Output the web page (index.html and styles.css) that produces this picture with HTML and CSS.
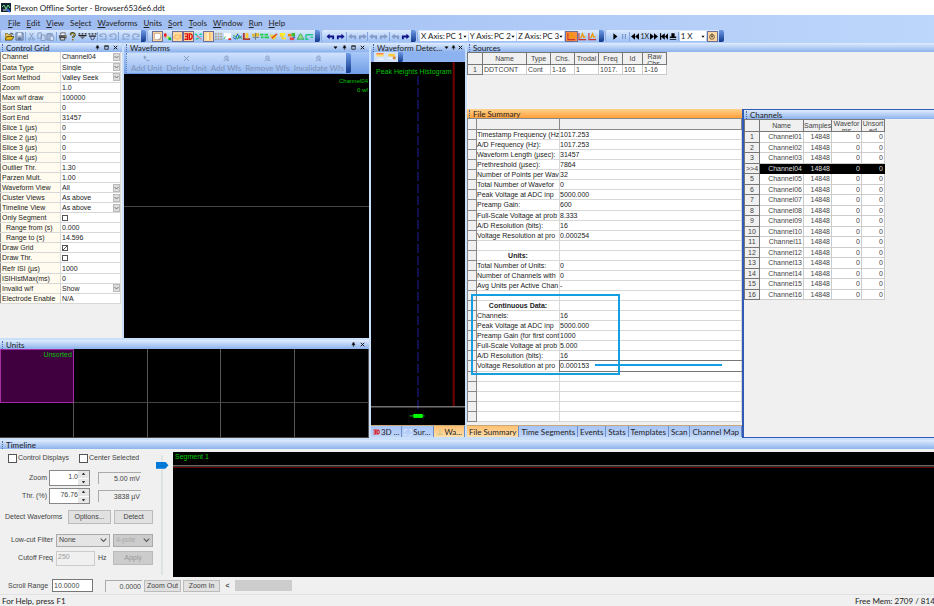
FILE: index.html
```html
<!DOCTYPE html>
<html lang="en">
<head>
    <meta charset="UTF-8">
    <meta name="viewport" content="width=device-width, initial-scale=1.0">
    <title>Plexon Offline Sorter - Browser6536e6.ddt</title>
    <link rel="stylesheet" href="styles.css">
</head>
<body>

    <!-- Icon set, 10x10 grid -->
    <svg class="icon-defs" aria-hidden="true">
        <symbol id="i-open" viewBox="0 0 10 10"><path d="M0 9V2h3l1 1h3v2" fill="#f0d060" stroke="#554400" stroke-width=".8"/><path d="M0 9l2-4h8L7.500 9z" fill="#e8b820" stroke="#443300" stroke-width=".8"/><path d="M6 1.500h2l1 1.500" fill="none" stroke="#222"/></symbol>
        <symbol id="i-save" viewBox="0 0 10 10"><path d="M1 1h8v8H1z" fill="#9fb2d2" stroke="#5b7299"/><path d="M3 1h4v3H3z" fill="#e8effa"/><path d="M3 6h4v3H3z" fill="#5b7299"/></symbol>
        <symbol id="i-cut" viewBox="0 0 10 10"><path d="M3 1l3.500 6M7 1L3.500 7" stroke="#8398bd"/><circle cx="3" cy="8" r="1.200" fill="none" stroke="#8398bd"/><circle cx="7" cy="8" r="1.200" fill="none" stroke="#8398bd"/></symbol>
        <symbol id="i-copy" viewBox="0 0 10 10"><path d="M1 1h4v6H1zM4.500 3.500h4.500v6H4.500z" fill="#c4d7f4" stroke="#8398bd"/></symbol>
        <symbol id="i-paste" viewBox="0 0 10 10"><path d="M1 2h6v7H1z" fill="#9fb4d6" stroke="#7d92b8"/><path d="M3 1h2v1.500H3z" fill="#7d92b8"/><path d="M4.500 4.500h4v5h-4z" fill="#d4e2f8" stroke="#8398bd"/></symbol>
        <symbol id="i-print" viewBox="0 0 10 10"><path d="M3 3V1h5v2" fill="#fff" stroke="#333" stroke-width=".8"/><path d="M1 3.500h8.500V7H1z" fill="#555"/><path d="M2.500 6h5v3h-5z" fill="#ccc" stroke="#222" stroke-width=".8"/><circle cx="8" cy="4.800" r=".6" fill="#cd3"/></symbol>
        <symbol id="i-help" viewBox="0 0 10 10"><path d="M3 3.500C3 .5 7.500.5 7.500 3 7.500 4.500 5.300 5 5.300 6.500" fill="none" stroke="#333" stroke-width="2.200"/><path d="M3.200 3.300C3.200 1 7.300 1 7.300 3 7.300 4.500 5.300 4.800 5.300 6" fill="none" stroke="#dc2" stroke-width="1"/><circle cx="5.300" cy="8.500" r="1" fill="#997700"/></symbol>
        <symbol id="i-meas" viewBox="0 0 10 10"><path d="M.5 2h2M4 2h2M7.500 2h2M.5 4h9" stroke="#222" stroke-width="1.500"/><path d="M2 5l3 3 3-3" fill="#667" /></symbol>
        <symbol id="i-meas2" viewBox="0 0 10 10"><path d="M.5 2h2M4 2h2M7.500 2h2M1 4.500h8" stroke="#222" stroke-width="1.500"/><circle cx="5" cy="6.500" r="2" fill="none" stroke="#446"/></symbol>
        <symbol id="i-undo" viewBox="0 0 10 10"><path d="M1 4c2-3 7-3 7 1L6.500 8" fill="none" stroke="#8aa1c9" stroke-width="1.200"/><path d="M1 8h8M1 2v3h3" fill="none" stroke="#8aa1c9"/></symbol>
        <symbol id="i-redo" viewBox="0 0 10 10"><path d="M9 4c-2-3-7-3-7 1l1.500 3" fill="none" stroke="#8aa1c9" stroke-width="1.200"/><path d="M1 8h8M9 2v3H6" fill="none" stroke="#8aa1c9"/></symbol>
        <symbol id="i-select" viewBox="0 0 10 10"><path d="M1.500 1.500h6l1 2v5h-7z" fill="#fff" stroke="#c9a68a"/><path d="M6 9l3-3" stroke="#888"/></symbol>
        <symbol id="i-clusters" viewBox="0 0 10 10"><path d="M1 2h3v3H1zM2 1h1v5H2z" fill="#e22"/><path d="M4 5h3v2H4z" fill="#ee2"/><path d="M6 6h3v3H6z" fill="#0b3"/></symbol>
        <symbol id="i-surface" viewBox="0 0 10 10"><path d="M1 6l2.500-3 2 2L8 3l1 3-4 2z" fill="#ffe0a0" stroke="#f5a030" stroke-width=".8"/></symbol>
        <symbol id="i-3d" viewBox="0 0 10 10"><path d="M.5 2h3.500v6H.5M1 5h3M6 2v6h1.500L9 6.500v-3L7.500 2z" fill="none" stroke="#d11" stroke-width="1.500"/></symbol>
        <symbol id="i-scatter" viewBox="0 0 10 10"><path d="M1 2l3 2M6 3l3-1M2 8l3-1" stroke="#1c8" stroke-width="1.500"/><path d="M3 4l5 4" stroke="#e66" stroke-width="1.200"/><path d="M6 5h3" stroke="#3cf"/></symbol>
        <symbol id="i-wave1" viewBox="0 0 10 10"><path d="M4.500 1v8" stroke="#fff3c0" stroke-width="2"/><path d="M6.500 1v8" stroke="#f5a030"/></symbol>
        <symbol id="i-grid" viewBox="0 0 10 10"><path d="M1 2h8M1 5h8M1 8h8" stroke="#7a6" stroke-dasharray="2 1"/><path d="M2 1v8M5 1v8M8 1v8" stroke="#c97" stroke-dasharray="2 1"/></symbol>
        <symbol id="i-wmin" viewBox="0 0 10 10"><path d="M1 1h8v7H1z" fill="#fff"/><path d="M1 8l2-3" stroke="#2a4" /><path d="M6 8h3" stroke="#d22" stroke-width="2"/></symbol>
        <symbol id="i-wave2" viewBox="0 0 10 10"><path d="M0 6l3 2 2-6 2 5 3-3" fill="none" stroke="#15c" stroke-width="1"/><path d="M0 4l3 1 2 3 2-4 3 4" fill="none" stroke="#2a3"/><path d="M3 3l2-2" stroke="#dd2"/></symbol>
        <symbol id="i-hist" viewBox="0 0 10 10"><path d="M1 1h2v6h6v2H1z" fill="#a33"/><path d="M4 1h3v6H4z" fill="#fc3"/></symbol>
        <symbol id="i-multi" viewBox="0 0 10 10"><path d="M1 2h4v3H1zM5 1h4v4H5z" fill="#db3"/><path d="M2 6h7M5 1v8" stroke="#777"/></symbol>
        <symbol id="i-green" viewBox="0 0 10 10"><path d="M0 3h4M5 3h4M1 6h3M5 6h5" stroke="#2c4" stroke-width="2"/></symbol>
        <symbol id="i-brush" viewBox="0 0 10 10"><path d="M1 3h7v3L5 9 2 6z" fill="#ec3"/><path d="M3 7l6-5" stroke="#d42" stroke-width="1.500"/></symbol>
        <symbol id="i-yellow" viewBox="0 0 10 10"><path d="M2 1h6v3H6v2h3v2H4V5H2z" fill="#fe2"/><path d="M3 3l3 5" stroke="#fa3"/></symbol>
        <symbol id="i-mix" viewBox="0 0 10 10"><path d="M1 2h4v3H1z" fill="#e80"/><path d="M5 1h4v4H5z" fill="#4b3"/><path d="M3 6h5v3H3z" fill="#e44"/><path d="M7 5h2v2H7z" fill="#36c"/></symbol>
        <symbol id="i-bell" viewBox="0 0 10 10"><path d="M1 8c2 0 2-6 4-6s2 6 4 6z" fill="#9d8" stroke="#3a5"/></symbol>
        <symbol id="i-tree" viewBox="0 0 10 10"><path d="M1 3h8M1 3v5h3M6 6h3" fill="none" stroke="#2c8" stroke-width="1.500"/></symbol>
        <symbol id="i-left" viewBox="0 0 10 10"><path d="M.5 5L4 2v2h5v4H7V6H4v2z"/></symbol>
        <symbol id="i-right" viewBox="0 0 10 10"><path d="M9.500 5L6 2v2H1v4h2V6h3v2z"/></symbol>
        <symbol id="i-chart" viewBox="0 0 10 10"><path d="M1 1v7.500h8" fill="none" stroke="#c33" stroke-width="1.200"/><path d="M3 7l2-5 1.500 4 2-1" fill="none" stroke="#e90" stroke-width="1.500"/></symbol>
        <symbol id="i-play" viewBox="0 0 10 10"><path d="M3 1l5 4-5 4z"/></symbol>
        <symbol id="i-pause" viewBox="0 0 10 10"><path d="M2.500 2h1.500v6H2.500zM6 2h1.500v6H6z" fill="#7b93c8"/></symbol>
        <symbol id="i-rew" viewBox="0 0 10 10"><path d="M5 1v8L0 5zM10 1v8L5 5z"/></symbol>
        <symbol id="i-ff" viewBox="0 0 10 10"><path d="M0 1v8l5-4zM5 1v8l5-4z"/></symbol>
        <symbol id="i-start" viewBox="0 0 10 10"><path d="M0 1h1.500v8H0zM6 1v8L1 5zM10 1v8L6 5z"/></symbol>
        <symbol id="i-stamp" viewBox="0 0 10 10"><path d="M3 1h4v4h2v2H1V5h2zM1 8h8v1H1z"/></symbol>
        <symbol id="i-loop" viewBox="0 0 10 10"><circle cx="5" cy="5.500" r="3" fill="none" stroke="#432" stroke-width=".9"/><path d="M5 1v5M3.500 4L5 6l1.500-2" fill="none" stroke="#432" stroke-width=".9"/></symbol>
        <symbol id="i-x" viewBox="0 0 10 10"><path d="M1.500 1.500l7 7M8.500 1.500l-7 7" stroke="#7f94ba" stroke-width="1.300"/></symbol>
        <symbol id="i-add" viewBox="0 0 10 10"><path d="M2 1v5M1 3h4M4 6l3 2.500" stroke="#7f94ba" stroke-width="1.300"/><circle cx="8" cy="8" r="1" fill="#7f94ba"/></symbol>
        <symbol id="i-lasso" viewBox="0 0 10 10"><circle cx="5" cy="4" r="2.800" fill="#a9c0e6" stroke="#8ba2ca"/><path d="M1 8h2M5 7.500h4" stroke="#7f94ba" stroke-width="1.200"/></symbol>
        <symbol id="i-down" viewBox="0 0 10 10"><path d="M1 3h8L5 8z"/></symbol>
        <symbol id="i-up" viewBox="0 0 10 10"><path d="M1 7h8L5 2z"/></symbol>
        <symbol id="i-pin" viewBox="0 0 10 10"><path d="M3 1h4v4h1.500v1.500h-3V10h-1V6.500h-3V5H3z"/></symbol>
        <symbol id="i-max" viewBox="0 0 10 10"><path d="M1.500 1.500h7v7h-7zM1 2.500h8" fill="none" stroke="#111" stroke-width="1.500"/></symbol>
        <symbol id="i-close" viewBox="0 0 10 10"><path d="M1.500 1.500l7 7M8.500 1.500l-7 7" stroke="#111" stroke-width="2"/></symbol>
        <symbol id="i-chev" viewBox="0 0 10 10"><path d="M1 3l4 4 4-4" fill="none" stroke="#555" stroke-width="1.500"/></symbol>
    </svg>

    <header class="titlebar">
        <svg class="app-icon" viewBox="0 0 10 10"><path d="M0 0h10v9H0z" fill="#123"/><path d="M1 4l2-2 2 4 2-4 2 3" fill="none" stroke="#7d8"/><path d="M2 7h5" stroke="#ddd"/><path d="M6 6l3 3" stroke="#36d" stroke-width="2"/></svg>
        <span>Plexon Offline Sorter - Browser6536e6.ddt</span>
    </header>

    <nav class="menubar">
        <button><u>F</u>ile</button>
        <button><u>E</u>dit</button>
        <button><u>V</u>iew</button>
        <button>Se<u>l</u>ect</button>
        <button><u>W</u>aveforms</button>
        <button><u>U</u>nits</button>
        <button><u>S</u>ort</button>
        <button><u>T</u>ools</button>
        <button><u>W</u>indow</button>
        <button><u>R</u>un</button>
        <button><u>H</u>elp</button>
    </nav>

    <div class="toolbars">
        <div class="toolbar toolbar-file">
            <button aria-label="Open"><svg><use href="#i-open"/></svg></button>
            <button aria-label="Save"><svg><use href="#i-save"/></svg></button>
            <i class="sep"></i>
            <button aria-label="Cut"><svg><use href="#i-cut"/></svg></button>
            <button aria-label="Copy"><svg><use href="#i-copy"/></svg></button>
            <button aria-label="Paste"><svg><use href="#i-paste"/></svg></button>
            <i class="sep"></i>
            <button aria-label="Print"><svg><use href="#i-print"/></svg></button>
            <button aria-label="Help"><svg><use href="#i-help"/></svg></button>
            <button aria-label="Measure"><svg><use href="#i-meas"/></svg></button>
            <button aria-label="Measure all"><svg><use href="#i-meas2"/></svg></button>
            <i class="sep"></i>
            <button aria-label="Undo"><svg><use href="#i-undo"/></svg></button>
            <button aria-label="Undo all"><svg><use href="#i-undo"/></svg></button>
            <i class="sep"></i>
            <button aria-label="Redo"><svg><use href="#i-redo"/></svg></button>
            <button aria-label="Redo all"><svg><use href="#i-redo"/></svg></button>
            <span class="cap"></span>
        </div>
        <div class="toolbar toolbar-views">
            <button class="on" aria-label="Select"><svg><use href="#i-select"/></svg></button>
            <button aria-label="Clusters"><svg><use href="#i-clusters"/></svg></button>
            <button class="on" aria-label="Surface"><svg><use href="#i-surface"/></svg></button>
            <button class="on" aria-label="3D"><svg><use href="#i-3d"/></svg></button>
            <button aria-label="Scatter"><svg><use href="#i-scatter"/></svg></button>
            <button class="on" aria-label="Waveform"><svg><use href="#i-wave1"/></svg></button>
            <button aria-label="Grid"><svg><use href="#i-grid"/></svg></button>
            <button aria-label="Minimum"><svg><use href="#i-wmin"/></svg></button>
            <button aria-label="Overlay"><svg><use href="#i-wave2"/></svg></button>
            <button aria-label="Histogram"><svg><use href="#i-hist"/></svg></button>
            <button aria-label="Multiple"><svg><use href="#i-multi"/></svg></button>
            <button aria-label="Rasters"><svg><use href="#i-green"/></svg></button>
            <button aria-label="Brush"><svg><use href="#i-brush"/></svg></button>
            <button aria-label="Fill"><svg><use href="#i-yellow"/></svg></button>
            <button aria-label="Mix"><svg><use href="#i-mix"/></svg></button>
            <button aria-label="Distribution"><svg><use href="#i-bell"/></svg></button>
            <button aria-label="Tree"><svg><use href="#i-tree"/></svg></button>
            <span class="cap"></span>
        </div>
        <div class="toolbar toolbar-nav">
            <button aria-label="Previous"><svg><use href="#i-left"/></svg></button>
            <button aria-label="Next"><svg><use href="#i-right"/></svg></button>
            <i class="sep"></i>
            <button class="dim" aria-label="Previous unit"><svg><use href="#i-left"/></svg></button>
            <button class="dim" aria-label="Next unit"><svg><use href="#i-right"/></svg></button>
            <i class="sep"></i>
            <button class="dim" aria-label="Previous segment"><svg><use href="#i-left"/></svg></button>
            <button class="dim" aria-label="Next segment"><svg><use href="#i-right"/></svg></button>
            <i class="sep"></i>
            <button class="dim" aria-label="Previous channel"><svg><use href="#i-left"/></svg></button>
            <button aria-label="Next channel"><svg><use href="#i-right"/></svg></button>
            <span class="cap"></span>
        </div>
        <div class="toolbar toolbar-axes">
            <div class="axis"><label for="xAxis">X Axis:</label><select id="xAxis"><option>PC 1</option></select><svg><use href="#i-down"/></svg></div>
            <div class="axis"><label for="yAxis">Y Axis:</label><select id="yAxis"><option>PC 2</option></select><svg><use href="#i-down"/></svg></div>
            <div class="axis"><label for="zAxis">Z Axis:</label><select id="zAxis"><option>PC 3</option></select><svg><use href="#i-down"/></svg></div>
            <button class="on hot" aria-label="Chart 1"><svg><use href="#i-chart"/></svg></button>
            <button aria-label="Chart 2"><svg><use href="#i-chart"/></svg></button>
            <button aria-label="Chart 3"><svg><use href="#i-chart"/></svg></button>
            <span class="cap"></span>
        </div>
        <div class="toolbar toolbar-play">
            <button aria-label="Play"><svg><use href="#i-play"/></svg></button>
            <button aria-label="Pause"><svg><use href="#i-pause"/></svg></button>
            <i class="sep"></i>
            <button aria-label="Rewind"><svg><use href="#i-rew"/></svg></button>
            <button class="rate">1X</button>
            <button aria-label="Forward"><svg><use href="#i-ff"/></svg></button>
            <button aria-label="To start"><svg><use href="#i-start"/></svg></button>
            <button aria-label="Stamp"><svg><use href="#i-stamp"/></svg></button>
            <i class="sep"></i>
            <div class="axis speed"><select aria-label="Speed"><option>1 X</option></select><svg><use href="#i-down"/></svg></div>
            <button class="on" aria-label="Loop"><svg><use href="#i-loop"/></svg></button>
            <span class="cap"></span>
        </div>
    </div>

    <main class="workspace">

        <div class="left-dock">
            <section class="panel">
                <h2 class="panel-title"><span>Control Grid</span><svg><use href="#i-pin"/></svg><svg><use href="#i-max"/></svg><svg><use href="#i-close"/></svg></h2>
                <div class="panel-body">
                    <table class="control-grid">
                        <tr><th>Channel</th><td><div class="combo"><select aria-label="Channel"><option>Channel04</option></select><svg><use href="#i-chev"/></svg></div></td></tr>
                        <tr><th>Data Type</th><td><div class="combo"><select aria-label="Data Type"><option>Single</option></select><svg><use href="#i-chev"/></svg></div></td></tr>
                        <tr><th>Sort Method</th><td><div class="combo"><select aria-label="Sort Method"><option>Valley Seek</option></select><svg><use href="#i-chev"/></svg></div></td></tr>
                        <tr><th>Zoom</th><td>1.0</td></tr>
                        <tr><th>Max w/f draw</th><td>100000</td></tr>
                        <tr><th>Sort Start</th><td>0</td></tr>
                        <tr><th>Sort End</th><td>31457</td></tr>
                        <tr><th>Slice 1 (µs)</th><td>0</td></tr>
                        <tr><th>Slice 2 (µs)</th><td>0</td></tr>
                        <tr><th>Slice 3 (µs)</th><td>0</td></tr>
                        <tr><th>Slice 4 (µs)</th><td>0</td></tr>
                        <tr><th>Outlier Thr.</th><td>1.30</td></tr>
                        <tr><th>Parzen Mult.</th><td>1.00</td></tr>
                        <tr><th>Waveform View</th><td><div class="combo"><select aria-label="Waveform View"><option>All</option></select><svg><use href="#i-chev"/></svg></div></td></tr>
                        <tr><th>Cluster Views</th><td><div class="combo"><select aria-label="Cluster Views"><option>As above</option></select><svg><use href="#i-chev"/></svg></div></td></tr>
                        <tr><th>Timeline View</th><td><div class="combo"><select aria-label="Timeline View"><option>As above</option></select><svg><use href="#i-chev"/></svg></div></td></tr>
                        <tr><th><label for="onlySegment">Only Segment</label></th><td><input type="checkbox" id="onlySegment"></td></tr>
                        <tr><th class="indent">Range from (s)</th><td>0.000</td></tr>
                        <tr><th class="indent">Range to (s)</th><td>14.596</td></tr>
                        <tr><th><label for="drawGrid">Draw Grid</label></th><td><input type="checkbox" id="drawGrid" checked></td></tr>
                        <tr><th><label for="drawThr">Draw Thr.</label></th><td><input type="checkbox" id="drawThr"></td></tr>
                        <tr><th>Refr ISI (µs)</th><td>1000</td></tr>
                        <tr><th>ISIHistMax(ms)</th><td>0</td></tr>
                        <tr><th>Invalid w/f</th><td><div class="combo"><select aria-label="Invalid w/f"><option>Show</option></select><svg><use href="#i-chev"/></svg></div></td></tr>
                        <tr><th>Electrode Enable</th><td>N/A</td></tr>
                    </table>
                </div>
            </section>

            <section class="panel">
                <h2 class="panel-title"><span>Waveforms</span><svg><use href="#i-down"/></svg><svg><use href="#i-pin"/></svg><svg><use href="#i-max"/></svg><svg><use href="#i-close"/></svg></h2>
                <div class="wf-strip">
                    <div class="wf-tools">
                        <button disabled><svg><use href="#i-add"/></svg>Add Unit</button>
                        <button disabled><svg><use href="#i-x"/></svg>Delete Unit</button>
                        <button disabled><svg><use href="#i-lasso"/></svg>Add Wfs</button>
                        <button disabled><svg><use href="#i-lasso"/></svg>Remove Wfs</button>
                        <button disabled><svg><use href="#i-lasso"/></svg>Invalidate Wfs</button>
                    </div>
                    <span class="cap"></span>
                </div>
                <div class="wf-plot">
                    <p>Channel04</p>
                    <p>0 wf</p>
                </div>
            </section>

            <section class="panel units">
                <h2 class="panel-title"><span>Units</span><svg><use href="#i-pin"/></svg><svg><use href="#i-close"/></svg></h2>
                <div class="unit-cells">
                    <div class="selected">Unsorted</div><div></div><div></div><div></div><div></div>
                    <div></div><div></div><div></div><div></div><div></div>
                </div>
            </section>
        </div>

        <section class="panel detector">
            <h2 class="panel-title"><span>Waveform Detec...</span><svg><use href="#i-down"/></svg><svg><use href="#i-pin"/></svg><svg><use href="#i-close"/></svg></h2>
            <div class="det-strip">
                <button aria-label="Peaks"><svg viewBox="0 0 10 10"><path d="M1 1h8v4H1z" fill="#fd6"/><path d="M1 2h8" stroke="#e55"/><path d="M3 8h6" stroke="#fff"/></svg></button>
                <button aria-label="Valleys"><svg viewBox="0 0 10 10"><path d="M1 2h7v3H1z" fill="#fc3"/><path d="M6 5h3v3H6z" fill="#d83"/><path d="M1 7h4" stroke="#fff"/></svg></button>
                <span class="cap"></span>
            </div>
            <div class="det-plot">
                <p>Peak Heights Histogram</p>
                <svg class="det-lines">
                    <line x1="50%" y1="14" x2="50%" y2="96%" stroke="#2020a0" stroke-dasharray="9 3"/>
                    <line x1="88%" y1="0" x2="88%" y2="95%" stroke="#700000" stroke-width="2"/>
                    <line x1="0" y1="95%" x2="100%" y2="95%" stroke="#aaa"/>
                    <line x1="41%" y1="97.500%" x2="57%" y2="97.500%" stroke="#0c0"/>
                    <line x1="45%" y1="97.500%" x2="55%" y2="97.500%" stroke="#0f0" stroke-width="4"/>
                </svg>
            </div>
            <div class="tabs">
                <button><svg><use href="#i-3d"/></svg>3D ...</button>
                <button><svg viewBox="0 0 10 10"><path d="M1 5V2h3M7 2h2v3M9 7v2H6M3 9H1V7" fill="none" stroke="#eef"/></svg>Sur...</button>
                <button class="active"><svg viewBox="0 0 10 10"><path d="M1 8h8M5 1v6" stroke="#dc8" stroke-width="2"/></svg>Wa...</button>
            </div>
        </section>

        <div class="right-dock">
            <section class="panel sources">
                <h2 class="panel-title"><span>Sources</span></h2>
                <div class="panel-body">
                    <table class="sheet source-table">
                        <thead>
                            <tr><th></th><th>Name</th><th>Type</th><th>Chs.</th><th>Trodal</th><th>Freq</th><th>Id</th><th><div class="clip">Raw<br>Chs.</div></th></tr>
                        </thead>
                        <tbody>
                            <tr><th>1</th><td>DDTCONT</td><td>Cont</td><td>1-16</td><td>1</td><td>1017.</td><td>101</td><td>1-16</td></tr>
                        </tbody>
                    </table>
                </div>
            </section>

            <section class="panel summary">
                <h2 class="panel-title orange"><span>File Summary</span></h2>
                <div class="panel-body">
                    <table class="summary-table">
                        <thead>
                            <tr><th></th><th></th><th></th></tr>
                        </thead>
                        <tbody>
                            <tr><th></th><td>Timestamp Frequency (Hz</td><td>1017.253</td></tr>
                            <tr><th></th><td>A/D Frequency (Hz):</td><td>1017.253</td></tr>
                            <tr><th></th><td>Waveform Length (µsec):</td><td>31457</td></tr>
                            <tr><th></th><td>Prethreshold (µsec):</td><td>7864</td></tr>
                            <tr><th></th><td>Number of Points per Wav</td><td>32</td></tr>
                            <tr><th></th><td>Total Number of Wavefor</td><td>0</td></tr>
                            <tr><th></th><td>Peak Voltage at ADC inp</td><td>5000.000</td></tr>
                            <tr><th></th><td>Preamp Gain:</td><td>600</td></tr>
                            <tr><th></th><td>Full-Scale Voltage at prob</td><td>8.333</td></tr>
                            <tr><th></th><td>A/D Resolution (bits):</td><td>16</td></tr>
                            <tr><th></th><td>Voltage Resolution at pro</td><td>0.000254</td></tr>
                            <tr><th></th><td></td><td></td></tr>
                            <tr><th></th><td class="group">Units:</td><td></td></tr>
                            <tr><th></th><td>Total Number of Units:</td><td>0</td></tr>
                            <tr><th></th><td>Number of Channels with</td><td>0</td></tr>
                            <tr><th></th><td>Avg Units per Active Chan</td><td>-</td></tr>
                            <tr><th></th><td></td><td></td></tr>
                            <tr><th></th><td class="group">Continuous Data:</td><td></td></tr>
                            <tr><th></th><td>Channels:</td><td>16</td></tr>
                            <tr><th></th><td>Peak Voltage at ADC inp</td><td>5000.000</td></tr>
                            <tr><th></th><td>Preamp Gain (for first cont</td><td>1000</td></tr>
                            <tr><th></th><td>Full-Scale Voltage at prob</td><td>5.000</td></tr>
                            <tr><th></th><td>A/D Resolution (bits):</td><td>16</td></tr>
                            <tr><th></th><td>Voltage Resolution at pro</td><td class="current">0.000153</td></tr>
                            <tr><th></th><td></td><td></td></tr>
                            <tr><th></th><td></td><td></td></tr>
                            <tr><th></th><td></td><td></td></tr>
                            <tr><th></th><td></td><td></td></tr>
                            <tr><th></th><td></td><td></td></tr>
                        </tbody>
                    </table>
                    <!-- Highlight drawn over the continuous data rows -->
                    <div class="callout"></div>
                    <div class="callout-line"></div>
                </div>
                <div class="tabs">
                    <button class="active">File Summary</button>
                    <button>Time Segments</button>
                    <button>Events</button>
                    <button>Stats</button>
                    <button>Templates</button>
                    <button>Scan</button>
                    <button>Channel Map</button>
                </div>
            </section>

            <section class="panel channels">
                <h2 class="panel-title"><span>Channels</span></h2>
                <div class="panel-body">
                    <table class="sheet channel-table">
                        <thead>
                            <tr><th></th><th>Name</th><th>Samples</th><th><div class="clip">Wavefor<br>ms</div></th><th><div class="clip">Unsort<br>ed</div></th></tr>
                        </thead>
                        <tbody>
                            <tr><th>1</th><td>Channel01</td><td>14848</td><td>0</td><td>0</td></tr>
                            <tr><th>2</th><td>Channel02</td><td>14848</td><td>0</td><td>0</td></tr>
                            <tr><th>3</th><td>Channel03</td><td>14848</td><td>0</td><td>0</td></tr>
                            <tr class="selected"><th>&gt;&gt;4</th><td>Channel04</td><td>14848</td><td>0</td><td>0</td></tr>
                            <tr><th>5</th><td>Channel05</td><td>14848</td><td>0</td><td>0</td></tr>
                            <tr><th>6</th><td>Channel06</td><td>14848</td><td>0</td><td>0</td></tr>
                            <tr><th>7</th><td>Channel07</td><td>14848</td><td>0</td><td>0</td></tr>
                            <tr><th>8</th><td>Channel08</td><td>14848</td><td>0</td><td>0</td></tr>
                            <tr><th>9</th><td>Channel09</td><td>14848</td><td>0</td><td>0</td></tr>
                            <tr><th>10</th><td>Channel10</td><td>14848</td><td>0</td><td>0</td></tr>
                            <tr><th>11</th><td>Channel11</td><td>14848</td><td>0</td><td>0</td></tr>
                            <tr><th>12</th><td>Channel12</td><td>14848</td><td>0</td><td>0</td></tr>
                            <tr><th>13</th><td>Channel13</td><td>14848</td><td>0</td><td>0</td></tr>
                            <tr><th>14</th><td>Channel14</td><td>14848</td><td>0</td><td>0</td></tr>
                            <tr><th>15</th><td>Channel15</td><td>14848</td><td>0</td><td>0</td></tr>
                            <tr><th>16</th><td>Channel16</td><td>14848</td><td>0</td><td>0</td></tr>
                        </tbody>
                    </table>
                </div>
            </section>
        </div>
    </main>

    <section class="timeline">
        <h2 class="panel-title"><span>Timeline</span></h2>
        <div class="timeline-body">
            <form class="timeline-form">
                <div class="checks">
                    <input type="checkbox" id="controlDisplays"><label for="controlDisplays">Control Displays</label>
                    <input type="checkbox" id="centerSelected"><label for="centerSelected">Center Selected</label>
                </div>
                <div class="form-row spin-row">
                    <label for="zoom">Zoom</label>
                    <div class="spin"><input type="text" id="zoom" value="1.0"><div><button type="button" aria-label="Zoom up"><svg><use href="#i-up"/></svg></button><button type="button" aria-label="Zoom down"><svg><use href="#i-down"/></svg></button></div></div>
                    <output>5.00 mV</output>
                </div>
                <div class="form-row spin-row">
                    <label for="thr">Thr. (%)</label>
                    <div class="spin"><input type="text" id="thr" value="76.76"><div><button type="button" aria-label="Threshold up"><svg><use href="#i-up"/></svg></button><button type="button" aria-label="Threshold down"><svg><use href="#i-down"/></svg></button></div></div>
                    <output>3838 µV</output>
                </div>
                <div class="form-row detect-row">
                    <span>Detect Waveforms</span>
                    <button type="button">Options...</button>
                    <button type="button">Detect</button>
                </div>
                <div class="form-row filter-row">
                    <label for="lowCut">Low-cut Filter</label>
                    <div class="combo"><select id="lowCut"><option>None</option></select><svg><use href="#i-chev"/></svg></div>
                    <div class="combo off"><select aria-label="Poles" disabled><option>4-pole</option></select><svg><use href="#i-chev"/></svg></div>
                </div>
                <div class="form-row cutoff-row">
                    <label for="cutoff">Cutoff Freq</label>
                    <input type="text" id="cutoff" value="250" disabled>
                    <span>Hz</span>
                    <button type="button" disabled>Apply</button>
                </div>
            </form>
            <input type="range" class="threshold" aria-label="Threshold" min="0" max="100" value="6">
            <div class="segment-plot">
                <p>Segment 1</p>
            </div>
        </div>
        <div class="scroll-row">
            <label for="scrollRange">Scroll Range</label>
            <input type="text" id="scrollRange" value="10.0000">
            <output>0.0000</output>
            <button type="button">Zoom Out</button>
            <button type="button">Zoom In</button>
            <button type="button" class="scroll-left">&lt;</button>
            <div class="scroll-thumb"></div>
        </div>
    </section>

    <footer class="statusbar">
        <span>For Help, press F1</span>
        <span class="memory">Free Mem: 2709 / 8141</span>
    </footer>

</body>
</html>
```
FILE: styles.css
```css
* {
    box-sizing: border-box;
}

body {
    display: flex;
    flex-direction: column;
    min-height: 100vh;
    margin: 0;
    overflow-x: hidden;
    font-family: Lato, 'Open Sans', sans-serif;
    font-size: 8px;
    line-height: 8px;
    color: #222;
    background-color: #f0f0f0;
}

button, input, select {
    margin: 0;
    padding: 0;
    border: 0;
    border-radius: 0;
    background: none;
    font: inherit;
    color: inherit;
    min-width: 0;
}

select {
    appearance: none;
}

p {
    margin: 0;
}

.icon-defs {
    display: none;
}

/* Title and menus */
.titlebar {
    display: flex;
    align-items: center;
    gap: 3px;
    height: 15px;
    padding-left: 1px;
    background-color: #fff;
}

.app-icon {
    width: 10px;
    height: 10px;
}

.menubar {
    display: flex;
    align-items: center;
    height: 15px;
    padding-left: 5px;
    background: linear-gradient(to right, #9cbaf0, #bdd6fb);
}

.menubar button {
    padding: 0 3px;
}

/* Toolbars */
.toolbars {
    display: flex;
    gap: 1px;
    height: 13px;
    background: linear-gradient(to right, #9cbaf0, #bdd6fb);
}

.toolbar {
    display: flex;
    align-items: center;
    height: 12px;
    padding-left: 4px;
    border-left: 1px dotted #6584bd;
    border-radius: 2px;
    background: linear-gradient(#dceafe, #9dc0f5);
}

.toolbar-file { width: 146px; }
.toolbar-views { width: 173px; }
.toolbar-nav { width: 95px; }
.toolbar-axes { width: 187px; padding-left: 2px; }
.toolbar-play { width: 119px; }

.toolbar button {
    display: flex;
    flex: 1;
    align-items: center;
    justify-content: center;
    height: 11px;
}

.toolbar svg {
    width: 9px;
    height: 9px;
}

.toolbar .on {
    border: 1px solid #6b6f99;
    background-color: #ffd9a0;
}

.toolbar .hot {
    background-color: #f98f3a;
}

.toolbar .rate {
    font-size: 7px;
}

.toolbar-nav svg {
    fill: #10108a;
}

.toolbar-nav .dim svg {
    fill: #8398c4;
}

.sep {
    width: 1px;
    height: 9px;
    margin-right: 1px;
    background-color: #84a5dc;
}

.cap {
    align-self: stretch;
    width: 5px;
    border-radius: 0 2px 2px 0;
    background: linear-gradient(#6d9ae6, #12398c);
}

.toolbar .cap {
    margin-left: 1px;
}

.toolbar-play svg {
    width: 8px;
}

.axis {
    display: flex;
    flex: none;
    align-items: center;
    height: 10px;
    margin-right: 1px;
    padding-left: 1px;
    background-color: #fff;
}

.axis label {
    flex: none;
    margin-right: 1px;
}

.axis select {
    flex: 1 0 auto;
}

.toolbar .axis svg {
    flex: none;
    width: 4px;
    height: 5px;
    margin-right: 1px;
}

.toolbar .speed {
    width: 26px;
}

/* Dock layout */
.workspace {
    display: grid;
    flex: 1;
    grid-template-columns: 369px 94px 1fr;
    gap: 2px;
    padding-bottom: 2px;
    background-color: #c9dffa;
}

.left-dock {
    display: grid;
    grid-template-columns: 122px 1fr;
    grid-template-rows: 1fr 98px;
    gap: 2px;
}

.right-dock {
    display: grid;
    grid-template-columns: 275px 1fr;
    grid-template-rows: 66px 1fr;
}

.panel {
    display: flex;
    flex-direction: column;
    min-width: 0;
    overflow: hidden;
}

.panel-title {
    display: flex;
    flex: none;
    align-items: center;
    gap: 4px;
    height: 9px;
    margin: 0;
    padding: 0 4px 0 2px;
    font-size: 8px;
    font-weight: normal;
    white-space: nowrap;
    background: linear-gradient(#dfecfe, #8db2ec);
}

.panel-title span {
    flex: 1;
    padding-left: 3px;
    border-left: 1px dotted #4a6aa5;
}

.panel-title svg {
    flex: none;
    width: 5px;
    height: 5px;
}

.detector .panel-title {
    gap: 2px;
    padding-right: 2px;
}

.orange {
    background: linear-gradient(#ffd28a, #ff9f3c);
}

.panel-body {
    position: relative;
    flex: 1;
    background-color: #f0f0f0;
}

/* Grids */
table {
    border-collapse: collapse;
    table-layout: fixed;
    font-family: 'Liberation Sans', Arial, sans-serif;
    font-size: 7px;
    line-height: 7px;
}

th, td {
    padding: 0 1px;
    overflow: hidden;
    font-weight: normal;
    text-align: left;
    white-space: nowrap;
}

.control-grid {
    width: 121px;
    height: 252px;
    border-left: 1px solid #888;
}

.control-grid tr {
    height: 10px;
}

.control-grid th, .control-grid td {
    border-right: 1px solid #d8d8d8;
    border-bottom: 1px solid #d8d8d8;
}

.control-grid th {
    width: 60px;
    background-color: #fffbee;
}

.control-grid .indent {
    padding-left: 5px;
}

.control-grid td {
    background-color: #fff;
}

.control-grid td:has(.combo) {
    padding-right: 0;
}

.combo {
    display: flex;
    align-items: center;
    height: 8px;
}

.combo select {
    flex: 1;
    height: 8px;
}

.combo svg {
    width: 7px;
    height: 8px;
    border: 1px solid #bbb;
    background-color: #ddd;
}

input[type="checkbox"] {
    appearance: none;
    display: block;
    width: 6px;
    height: 6px;
    border: 1px solid #555;
    background-color: #fff;
}

input[type="checkbox"]:checked {
    background: linear-gradient(135deg, #fff 40%, #555 40%, #555 60%, #fff 60%);
}

/* Waveforms */
.wf-strip {
    display: flex;
    height: 22px;
    padding: 1px 18px 1px 2px;
    background: linear-gradient(#a9c8f8, #6f9de6);
}

.wf-tools {
    display: flex;
    flex: 1;
    justify-content: space-between;
    padding: 0 2px 0 4px;
    border-left: 1px dotted #6584bd;
    background: linear-gradient(#cfe1fc, #95b9f2);
}

.wf-tools button {
    display: flex;
    flex-direction: column;
    align-items: center;
    justify-content: center;
    gap: 2px;
    color: #8093b8;
    white-space: nowrap;
}

.wf-tools svg {
    width: 7px;
    height: 7px;
}

.wf-plot {
    flex: 1;
    padding: 3px 1px;
    background: linear-gradient(#444, #444) 0 50% / 100% 1px no-repeat #000;
    font-family: 'Liberation Sans', Arial, sans-serif;
    font-size: 6px;
    line-height: 9px;
    text-align: right;
    color: #00c000;
}

/* Units */
.units {
    grid-column: 1 / 3;
}

.unit-cells {
    display: grid;
    flex: 1;
    grid-template-columns: repeat(5, 1fr);
    grid-template-rows: 54px 1fr;
    background-color: #000;
}

.unit-cells div {
    border-right: 1px solid #555;
    border-bottom: 1px solid #444;
}

.unit-cells .selected {
    padding: 1px;
    border: 1px solid #a52ba5;
    background-color: #400040;
    font-family: 'Liberation Sans', Arial, sans-serif;
    font-size: 7px;
    text-align: right;
    color: #00c000;
}

/* Waveform detector */
.det-strip {
    display: flex;
    height: 10px;
    padding-left: 3px;
    background-color: #8cb3f0;
}

.det-strip button {
    width: 12px;
    background-color: #d3e3fc;
}

.det-strip svg {
    width: 10px;
    height: 9px;
}

.det-plot {
    position: relative;
    flex: 1;
    padding: 6px 5px;
    background-color: #000;
    font-family: 'Liberation Sans', Arial, sans-serif;
    font-size: 7px;
    color: #00c000;
    white-space: nowrap;
}

.det-lines {
    position: absolute;
    inset: 0;
    width: 100%;
    height: 100%;
}

.tabs {
    display: flex;
    height: 13px;
    border-top: 1px solid #c8a878;
    background-color: #c9dffa;
}

.tabs button {
    display: flex;
    align-items: center;
    gap: 1px;
    height: 11px;
    padding: 0 2px;
    border-right: 1px solid #6f8fc8;
    background: linear-gradient(#a7c4f6, #c0d6fa);
    white-space: nowrap;
}

.tabs svg {
    width: 8px;
    height: 8px;
}

.tabs .active {
    background: linear-gradient(#ffc070, #ffe0ad);
}

.detector .tabs button {
    flex: 1;
}

/* Sources and channels */
.sources {
    grid-column: 1 / 3;
}

.sheet {
    color: #444;
}

.sheet th, .sheet td {
    border: 1px solid #ccc;
}

.sheet th {
    border-color: #777;
    background-color: #f0f0f0;
    text-align: center;
}

.sheet td {
    background-color: #fff;
}

.clip {
    height: 11px;
    overflow: hidden;
}

.source-table {
    width: 200px;
}

.source-table thead th {
    width: 24px;
    height: 12px;
    padding: 0;
}

.source-table thead th:nth-child(1) { width: 15px; }
.source-table thead th:nth-child(2) { width: 44px; }
.source-table thead th:nth-child(7) { width: 20px; }

.source-table tbody tr {
    height: 10px;
}

.channels {
    border: solid #2f5bb7;
    border-width: 1px 0 1px 2px;
}

.channel-table {
    width: 140px;
    height: 181px;
}

.channel-table thead th {
    width: 30px;
    height: 12px;
    padding: 0;
}

.channel-table thead th:nth-child(1) { width: 15px; }
.channel-table thead th:nth-child(2) { width: 44px; }
.channel-table thead th:nth-child(3) { width: 28px; }
.channel-table thead th:nth-child(5) { width: 23px; }

.channel-table td {
    text-align: right;
}

.channel-table .selected td {
    border-color: #000;
    background-color: #000;
    color: #ddd;
}

/* File summary */
.summary-table {
    width: 100%;
    height: 304px;
    background-color: #fff;
}

.summary-table tbody tr {
    height: 10px;
}

.summary-table th {
    border: 1px solid #888;
    background-color: #f0f0f0;
}

.summary-table td {
    border: 1px solid #d8d8d8;
    padding: 0;
}

.summary-table thead th {
    height: 11px;
}

.summary-table thead th:nth-child(1) { width: 9px; }
.summary-table thead th:nth-child(2) { width: 83px; }

.summary-table .group {
    font-weight: bold;
    text-align: center;
}

.summary-table .current {
    outline: 1px solid #777;
}

.callout {
    position: absolute;
    top: 176px;
    left: 4px;
    width: 149px;
    height: 81px;
    border: 2px solid #149fe2;
}

.callout-line {
    position: absolute;
    top: 246px;
    left: 128px;
    width: 127px;
    height: 2px;
    background-color: #149fe2;
}

/* Timeline */
.timeline {
    font-family: 'Liberation Sans', Arial, sans-serif;
    font-size: 7px;
    color: #444;
}

.timeline .panel-title {
    font-family: Lato, 'Open Sans', sans-serif;
    color: #222;
}

.timeline-body {
    display: grid;
    grid-template-columns: 153px 16px 1fr;
    gap: 2px;
    padding-top: 3px;
}

.timeline-form {
    display: flex;
    flex-direction: column;
    gap: 2px;
    white-space: nowrap;
}

.checks {
    display: flex;
    align-items: center;
    gap: 1px;
    height: 12px;
    margin-bottom: 4px;
    padding-left: 8px;
}

.checks input[type="checkbox"] {
    width: 9px;
    height: 9px;
}

.checks label:first-of-type {
    width: 60px;
}

.form-row {
    display: grid;
    align-items: center;
    height: 16px;
}

.form-row label {
    text-align: right;
}

.spin-row {
    grid-template-columns: 47px 41px 43px;
    column-gap: 2px;
}

.spin-row output {
    margin-left: 6px;
    margin-right: -6px;
}

.spin {
    display: flex;
    height: 16px;
    border: 1px solid #888;
    background-color: #fff;
}

.spin input {
    width: 28px;
    height: 10px;
    text-align: right;
}

.spin div {
    display: flex;
    flex: 1;
    flex-direction: column;
    gap: 1px;
}

.spin button {
    display: flex;
    flex: 1;
    align-items: center;
    justify-content: center;
    background-color: #e6e6e6;
}

.spin svg {
    width: 5px;
    height: 4px;
}

output {
    height: 12px;
    padding: 2px 1px;
    border-top: 1px solid #aaa;
    border-left: 1px solid #aaa;
    text-align: right;
}

.form-row > button, .scroll-row button {
    height: 14px;
    border: 1px solid #bbb;
    background-color: #e1e1e1;
}

.timeline button:disabled {
    background-color: #ccc;
    color: #999;
}

.detect-row {
    grid-template-columns: 60px 43px 39px;
    column-gap: 3px;
    margin-top: 3px;
    padding-left: 5px;
}

.filter-row, .cutoff-row {
    grid-template-columns: 53px 54px 40px;
    column-gap: 3px;
}

.filter-row {
    margin-top: 5px;
}

.form-row .combo {
    height: 13px;
    padding: 0 2px;
    border: 1px solid #aaa;
    background-color: #e4e4e4;
}

.form-row .combo svg {
    border: 0;
    background: none;
}

.form-row .off {
    background-color: #ccc;
    color: #999;
}

.cutoff-row {
    grid-template-columns: 53px 39px 12px 40px;
}

.cutoff-row input {
    height: 15px;
    padding: 0 1px 4px;
    border: 1px solid #ccc;
    color: #999;
}

.threshold {
    appearance: none;
    width: 14px;
    height: 120px;
    margin-top: 3px;
    writing-mode: vertical-lr;
    background: linear-gradient(#dde4e4, #dde4e4) 50% 0 / 2px 100% no-repeat;
}

.threshold::-webkit-slider-thumb {
    appearance: none;
    width: 13px;
    height: 7px;
    background-color: #0078d7;
    clip-path: polygon(0 0, 75% 0, 100% 50%, 75% 100%, 0 100%);
}

.segment-plot {
    height: 125px;
    padding: 1px 2px;
    background: linear-gradient(#666 1px, #333 1px, #333 2px, #600 2px) 0 13px / 100% 3px no-repeat #000;
    color: #00d000;
}

.scroll-row {
    display: flex;
    align-items: center;
    gap: 2px;
    height: 17px;
}

.scroll-row label {
    width: 50px;
    padding-left: 8px;
    white-space: nowrap;
}

.scroll-row input {
    width: 41px;
    height: 13px;
    padding: 0 1px;
    border: 1px solid #777;
    background-color: #fff;
}

.scroll-row output {
    width: 37px;
    margin-left: 10px;
}

.scroll-row button {
    width: 37px;
    height: 12px;
    white-space: nowrap;
}

.scroll-row .scroll-left {
    width: 11px;
    border: 0;
    background: none;
    font-weight: bold;
}

.scroll-thumb {
    width: 57px;
    height: 11px;
    background-color: #cdcdcd;
}

.statusbar {
    display: flex;
    align-items: center;
    justify-content: space-between;
    height: 12px;
    padding-left: 2px;
    border-top: 1px solid #e2e2e2;
    white-space: nowrap;
}

.memory {
    width: 79px;
}
```
